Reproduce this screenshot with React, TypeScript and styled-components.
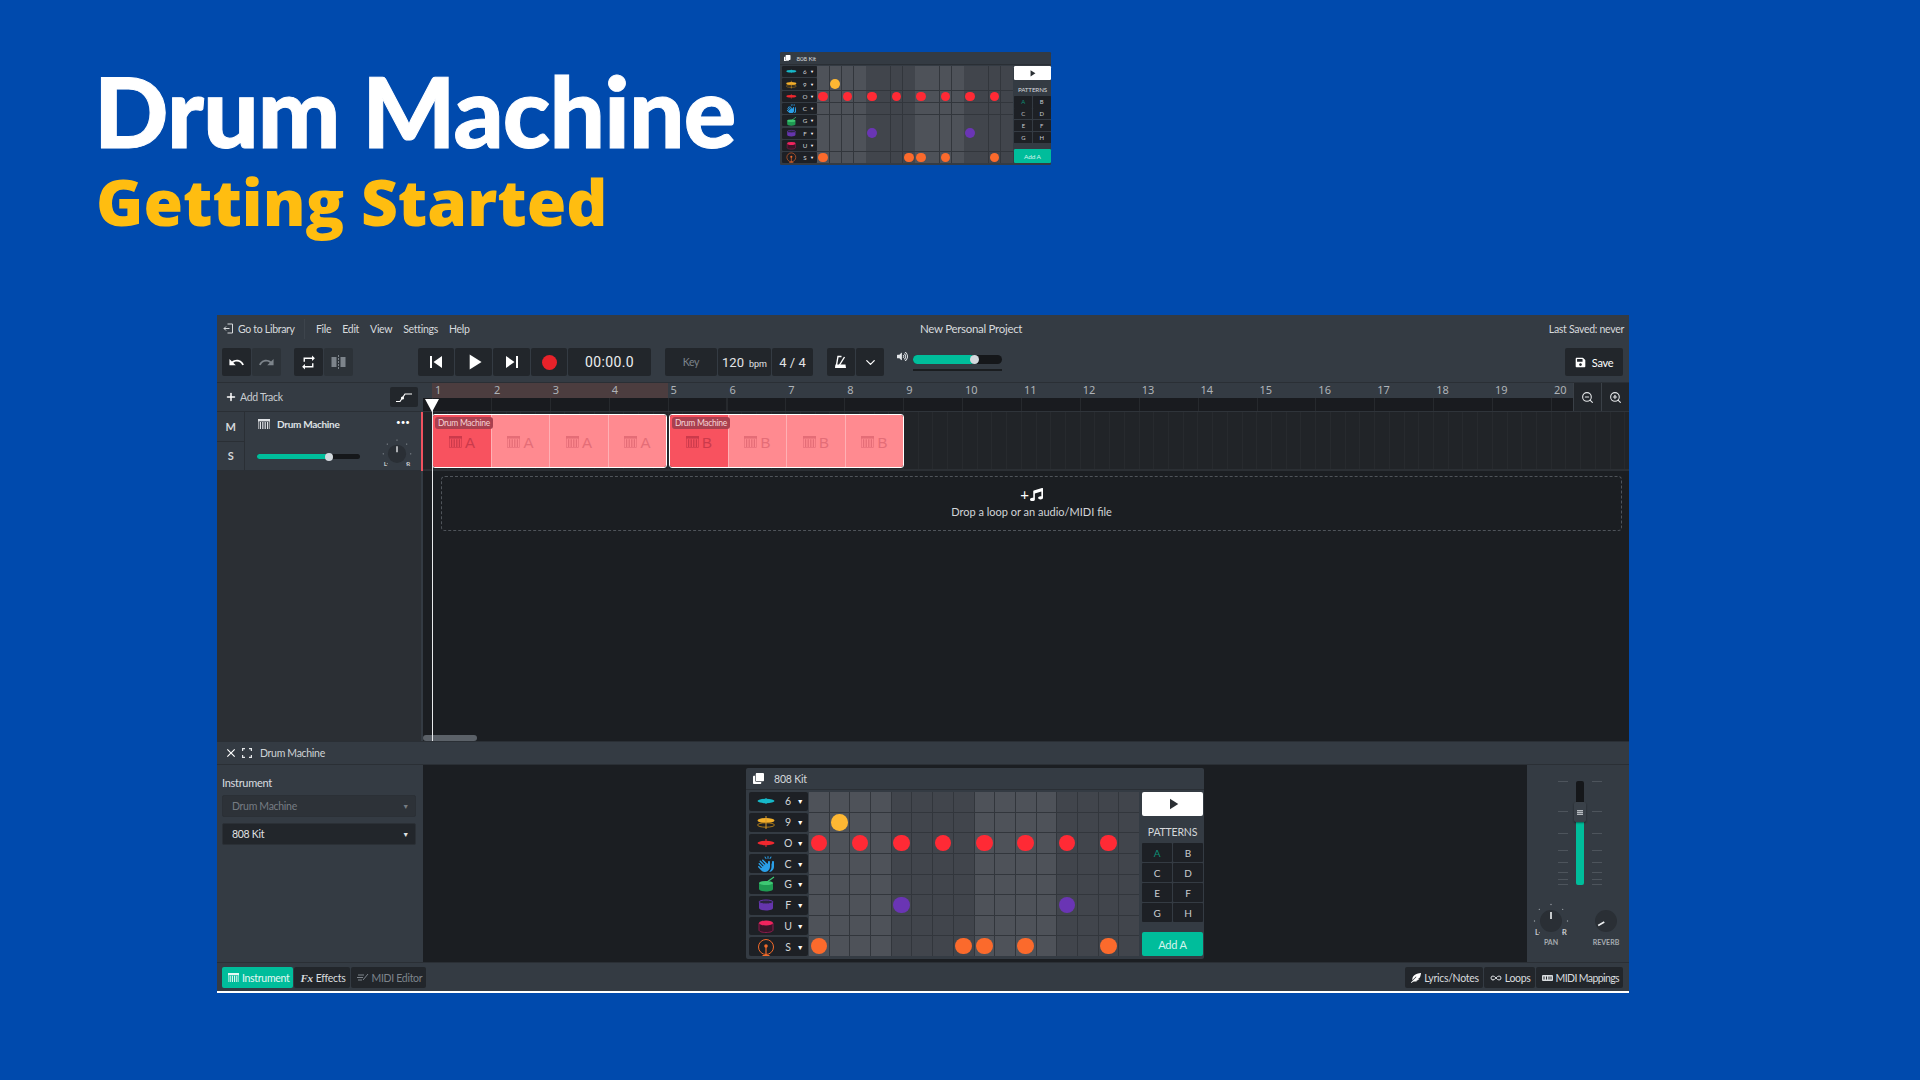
import React, { FC, ReactNode } from "react";
import styled, { createGlobalStyle } from "styled-components";
import { FaMusic, FaSave, FaVolumeUp, FaClone, FaFeatherAlt } from "react-icons/fa";
import { FaHandsClapping } from "react-icons/fa6";
import { MdClose, MdPlayArrow, MdRedo, MdRepeat, MdSkipNext, MdSkipPrevious, MdUndo } from "react-icons/md";
import { ChevronDown, Infinity as InfinityIcon, Plus, ZoomIn, ZoomOut } from "lucide-react";

const GlobalStyle = createGlobalStyle`
    html, body {
        margin: 0;
        padding: 0;
        background: #004aad;
    }
    * {
        box-sizing: border-box;
    }
`;

const green = "#00bd9b";
const panel = "#343b43";
const darkButton = "#22262b";
const stage = "#1b1e22";

const Page = styled.div`
    width: 1920px;
    height: 1080px;
    overflow: hidden;
    background: #004aad;
    font-family: "Lato", "Noto Sans", sans-serif;
`;

const Hero = styled.header`
    height: 315px;
    display: flex;
    padding: 52px 0 0 94px;
`;

const HeroText = styled.div`
    width: 686px;
    padding-top: 2px;
`;

const Title = styled.h1`
    margin: 0;
    font-family: "Lato", sans-serif;
    font-weight: 900;
    font-size: 98px;
    line-height: 112px;
    letter-spacing: -0.8px;
    color: #fff;
    -webkit-text-stroke: 1px #fff;
    white-space: nowrap;
`;

const Subtitle = styled.h2`
    margin: 0 0 0 2px;
    font-family: "Open Sans", sans-serif;
    font-weight: 800;
    font-size: 64px;
    line-height: 72px;
    color: #ffbd10;
    white-space: nowrap;
`;

const Thumb = styled.div`
    zoom: 0.592;
    height: 191px;
`;

const Window = styled.main`
    width: 1412px;
    height: 678px;
    margin-left: 217px;
    display: flex;
    flex-direction: column;
    background: ${panel};
    border-bottom: 2px solid #fff;
    color: #d7dadd;
    font-size: 10.5px;
    letter-spacing: -0.3px;
`;

const TopBar = styled.div`
    height: 32px;
    flex: none;
    display: grid;
    grid-template-columns: 703px auto 1fr;
    align-items: center;
    padding: 0 5px 5px 0;
`;

const TopLeft = styled.div`
    display: flex;
    align-items: center;
    padding-left: 6px;
`;

const LibraryLink = styled.span`
    display: flex;
    align-items: center;
    gap: 4px;
    width: 93px;
`;

const MenuDivider = styled.span`
    width: 1px;
    height: 20px;
    margin: 0 11px 0 -12px;
    background: #3d444c;
`;

const MenuItem = styled.span`
    margin-right: 11px;
`;

const ProjectName = styled.span`
    font-size: 11.5px;
`;

const LastSaved = styled.span`
    justify-self: end;
`;

const Toolbar = styled.div`
    height: 36px;
    flex: none;
    display: flex;
    align-items: flex-start;
    padding: 1px 6px 0 5px;
    border-bottom: 1px solid #2a2f35;
`;

const Group = styled.div<{ $left?: number }>`
    display: flex;
    height: 28px;
    gap: 1px;
    margin-left: ${({ $left }) => $left ?? 0}px;
`;

const ToolButton = styled.div<{ $width?: number; $muted?: boolean; $faded?: boolean }>`
    width: ${({ $width }) => $width ?? 29}px;
    height: 28px;
    display: flex;
    align-items: center;
    justify-content: center;
    background: ${({ $faded }) => ($faded ? "#2c3238" : darkButton)};
    color: ${({ $muted }) => ($muted ? "#7d848b" : "#fff")};
    border-radius: 2px;
    white-space: nowrap;
`;

const RecordDot = styled.span`
    width: 15px;
    height: 15px;
    border-radius: 50%;
    background: #e8222a;
`;

const TimeText = styled.span`
    font-family: "Roboto", sans-serif;
    font-size: 14px;
    letter-spacing: 0.4px;
    color: #eceef0;
`;

const BpmText = styled.span`
    font-family: "Roboto", sans-serif;
    font-size: 13px;
    letter-spacing: 0;
    color: #e2e4e6;
    small {
        font-size: 9px;
        margin-left: 5px;
    }
`;

const VolumeBox = styled.div`
    display: flex;
    gap: 5px;
    margin-left: 13px;
    padding-top: 3px;
    color: #e4e7ea;
`;

const VolumeSlider = styled.div`
    width: 89px;
    padding-top: 4px;
`;

const VolumeTrack = styled.div`
    position: relative;
    height: 9px;
    border-radius: 5px;
    background: #15171a;
    margin-bottom: 5px;
`;

const VolumeFill = styled.div`
    height: 9px;
    border-radius: 5px;
    background: ${green};
`;

const VolumeThumb = styled.span<{ $size: number; $top: number }>`
    position: absolute;
    top: ${({ $top }) => $top}px;
    width: ${({ $size }) => $size}px;
    height: ${({ $size }) => $size}px;
    border-radius: 50%;
    background: #d3d9de;
`;

const VolumeLine = styled.div`
    height: 2px;
    background: #1a1d20;
`;

const SaveButton = styled(ToolButton)`
    margin-left: auto;
    gap: 6px;
    font-size: 11px;
`;

const Arrangement = styled.div`
    position: relative;
    height: 358px;
    flex: none;
    display: flex;
`;

const TrackColumn = styled.div`
    width: 204px;
    flex: none;
    display: flex;
    flex-direction: column;
    background: #2b2f34;
`;

const AddTrackRow = styled.div`
    height: 29px;
    flex: none;
    display: flex;
    align-items: center;
    justify-content: space-between;
    padding: 0 3px 0 8px;
    background: ${panel};
    border-bottom: 1px solid #2a2f35;
`;

const AddTrack = styled.span`
    display: flex;
    align-items: center;
    gap: 3px;
    color: #c9cdd1;
`;

const AutomationButton = styled.div`
    width: 28px;
    height: 20px;
    display: flex;
    align-items: center;
    justify-content: center;
    background: ${darkButton};
    border-radius: 2px;
`;

const TrackRow = styled.div`
    height: 59px;
    flex: none;
    display: flex;
    background: ${panel};
    border-bottom: 1px solid #2a2f35;
`;

const TrackToggles = styled.div`
    width: 28px;
    flex: none;
    display: flex;
    flex-direction: column;
    border-right: 1px solid #2a2f35;
`;

const Toggle = styled.div`
    flex: 1;
    display: flex;
    align-items: center;
    justify-content: center;
    font-weight: 700;
    font-size: 11px;
    color: #d4d7da;
    & + & {
        border-top: 1px solid #2a2f35;
    }
`;

const TrackBody = styled.div`
    position: relative;
    flex: 1;
    padding: 5px 0 0 13px;
`;

const TrackName = styled.div`
    display: flex;
    align-items: center;
    gap: 7px;
    height: 14px;
    font-weight: 700;
    font-size: 10px;
    color: #dfe2e5;
`;

const TrackMore = styled.span`
    position: absolute;
    top: 5px;
    right: 11px;
    font-size: 8px;
    letter-spacing: 0;
    color: #fff;
`;

const TrackSlider = styled.div`
    position: relative;
    width: 103px;
    height: 5px;
    margin: 23px 0 0 -1px;
    border-radius: 3px;
    background: #15171a;
`;

const TrackFill = styled.div`
    height: 5px;
    border-radius: 3px;
    background: ${green};
`;

const TrackKnob = styled.div`
    position: absolute;
    top: 26px;
    right: 9px;
`;

const RedLine = styled.div`
    width: 2px;
    flex: none;
    height: 88px;
    background: linear-gradient(${panel} 0 29px, #f0525f 29px 88px);
`;

const Timeline = styled.div`
    flex: 1;
    min-width: 0;
    display: flex;
    flex-direction: column;
    background: ${stage};
`;

const RulerRow = styled.div`
    height: 29px;
    flex: none;
    display: flex;
    border-bottom: 1px solid #2f343a;
`;

const Ruler = styled.div`
    flex: 1;
    min-width: 0;
    display: flex;
    flex-direction: column;
`;

const BarNumbers = styled.div`
    height: 15px;
    display: flex;
    padding-left: 9px;
    background: ${panel};
`;

const BarNumber = styled.span<{ $loop: boolean }>`
    width: 58.9px;
    flex: none;
    padding-left: 3px;
    line-height: 14px;
    font-size: 11px;
    letter-spacing: 0;
    font-family: "Noto Sans", sans-serif;
    color: #aeb3b8;
    background: ${({ $loop }) => ($loop ? "#4c3d3f" : "transparent")};
`;

const Ticks = styled.div`
    flex: 1;
    background-color: #191b1f;
    background-image: repeating-linear-gradient(90deg, #26292d 0 1px, transparent 1px 58.9px);
    background-position: 9px 0;
`;

const ZoomButton = styled.div`
    width: 28px;
    flex: none;
    display: flex;
    align-items: center;
    justify-content: center;
    background: ${darkButton};
    border-left: 1px solid #3a4047;
    color: #e5e7e9;
`;

const Lane = styled.div`
    height: 59px;
    flex: none;
    display: flex;
    gap: 2px;
    padding: 2px 0 0 9px;
    background-color: #212428;
    background-image: repeating-linear-gradient(90deg, #272a2e 0 1px, transparent 1px 14.72px);
    background-position: 9px 0;
    border-bottom: 2px solid #2b2f34;
`;

const Clip = styled.div`
    position: relative;
    width: 235px;
    height: 54px;
    display: flex;
    border: 1.5px solid #fff;
    border-radius: 3px;
    overflow: hidden;
`;

const ClipCell = styled.div<{ $first: boolean }>`
    flex: 1;
    display: flex;
    align-items: center;
    justify-content: center;
    gap: 3px;
    padding-top: 2px;
    font-family: "Liberation Sans", sans-serif;
    font-size: 15px;
    color: ${({ $first }) => ($first ? "#cb3a4b" : "#e46d77")};
    background: ${({ $first }) => ($first ? "#f8525f" : "#ff8a90")};
    & + & {
        border-left: 1px solid #ffb0b4;
    }
`;

const ClipLabel = styled.span`
    position: absolute;
    top: 2px;
    left: 2px;
    padding: 0 3px;
    height: 12px;
    line-height: 12px;
    border-radius: 3px;
    font-family: "Lato", sans-serif;
    font-size: 8.5px;
    white-space: nowrap;
    color: #f6d3d5;
    background: #a9404f;
`;

const LowerLane = styled.div`
    flex: 1;
    min-height: 0;
    display: flex;
    flex-direction: column;
    padding: 5px 7px 0 18px;
`;

const DropZone = styled.div`
    height: 55px;
    display: flex;
    flex-direction: column;
    align-items: center;
    justify-content: center;
    gap: 2px;
    padding-bottom: 4px;
    border: 1px dashed #4f545a;
    border-radius: 4px;
    font-size: 11px;
    letter-spacing: 0;
    color: #d2d5d8;
`;

const DropIcon = styled.div`
    display: flex;
    align-items: center;
    gap: 1px;
    height: 17px;
    font-size: 15px;
    color: #fff;
`;

const ScrollTrack = styled.div`
    height: 6px;
    margin: auto 0 0 -18px;
`;

const ScrollThumb = styled.div`
    width: 54px;
    height: 6px;
    border-radius: 3px;
    background: #5b6168;
`;

const Playhead = styled.div`
    position: absolute;
    top: 16px;
    bottom: 0;
    left: 208px;
    width: 14px;
`;

const PlayheadLine = styled.span`
    position: absolute;
    top: 11px;
    bottom: 0;
    left: 6.5px;
    width: 1px;
    background: #e8eaec;
`;

const PlayheadHead = styled.span`
    position: absolute;
    top: 0;
    left: 0;
    width: 0;
    height: 0;
    border-left: 7px solid transparent;
    border-right: 7px solid transparent;
    border-top: 13px solid #fff;
`;

const EditorHeader = styled.div`
    height: 24px;
    flex: none;
    display: flex;
    align-items: center;
    gap: 4px;
    padding-left: 7px;
    border-top: 1px solid #2a2f35;
    border-bottom: 1px solid #2a2f35;
    color: #cfd3d6;
`;

const EditorTitle = styled.span`
    margin-left: 4px;
`;

const EditorBody = styled.div`
    height: 197px;
    flex: none;
    display: flex;
`;

const InstrumentPanel = styled.div`
    width: 206px;
    flex: none;
    padding: 10px 7px 0 5px;
`;

const FieldLabel = styled.div`
    height: 20px;
    line-height: 16px;
    font-size: 11px;
    color: #dadde0;
`;

const Select = styled.div<{ $disabled?: boolean }>`
    height: 22px;
    display: flex;
    align-items: center;
    justify-content: space-between;
    padding: 0 6px 0 9px;
    margin-bottom: 6px;
    border-radius: 2px;
    border: 1px solid #2b3036;
    font-size: 10.5px;
    background: ${({ $disabled }) => ($disabled ? "#2d3238" : "#22262b")};
    color: ${({ $disabled }) => ($disabled ? "#767c83" : "#e0e2e4")};
`;

const Caret = styled.span`
    font-size: 7px;
`;

const WidgetStage = styled.div`
    flex: 1;
    min-width: 0;
    display: flex;
    align-items: center;
    justify-content: center;
    background: ${stage};
`;

const MixerPanel = styled.div`
    width: 102px;
    flex: none;
    display: flex;
    flex-direction: column;
    align-items: center;
    padding-top: 16px;
`;

const FaderBox = styled.div`
    position: relative;
    width: 44px;
    height: 104px;
    margin-left: 4px;
`;

const FaderTrack = styled.div`
    position: absolute;
    left: 18px;
    top: 0;
    width: 8px;
    height: 104px;
    border-radius: 2px;
    background: linear-gradient(#15171a 0 40px, ${green} 40px);
`;

const FaderHandle = styled.div`
    position: absolute;
    left: 16px;
    top: 21px;
    width: 12px;
    height: 20px;
    display: flex;
    align-items: center;
    justify-content: center;
    border-radius: 2px;
    background: #3a4149;
    box-shadow: 0 1px 2px #0007;
`;

const FaderGrip = styled.span`
    width: 6px;
    height: 5px;
    background: repeating-linear-gradient(#b6bbc0 0 1px, #6c7279 1px 2px);
`;

const FaderTick = styled.span<{ $right: boolean }>`
    position: absolute;
    ${({ $right }) => ($right ? "right: 0" : "left: 0")};
    width: 10px;
    height: 1px;
    background: #4d545c;
`;

const KnobRow = styled.div`
    display: flex;
    gap: 19px;
    margin: 17px 0 0 1px;
`;

const KnobBlock = styled.div`
    width: 36px;
    display: flex;
    flex-direction: column;
    align-items: center;
    font-size: 7px;
    font-weight: 700;
    letter-spacing: 0;
    color: #a6abb0;
`;

const BottomBar = styled.div`
    height: 29px;
    flex: none;
    display: flex;
    align-items: flex-start;
    justify-content: space-between;
    padding: 4px 6px 0 5px;
    border-top: 1px solid #2a2f35;
`;

const TabGroup = styled.div`
    display: flex;
    gap: 1px;
`;

const Tab = styled.div<{ $active?: boolean; $muted?: boolean; $tight?: boolean }>`
    height: 21px;
    display: flex;
    align-items: center;
    gap: 3px;
    padding: 0 4px 0 6px;
    border-radius: 2px;
    font-size: 10.5px;
    white-space: nowrap;
    letter-spacing: ${({ $tight }) => ($tight ? "-0.6px" : "-0.3px")};
    background: ${({ $active }) => ($active ? green : darkButton)};
    color: ${({ $active, $muted }) => ($active ? "#e6f8f4" : $muted ? "#7d848b" : "#d9dcdf")};
`;

const FxMark = styled.i`
    font-family: "Liberation Serif", serif;
    font-weight: 700;
    font-size: 11px;
`;

const Widget = styled.div`
    width: 458px;
    height: 191px;
    flex: none;
    display: flex;
    flex-direction: column;
    border-radius: 2px;
    background: ${panel};
    color: #d7dadd;
    font-family: "Lato", "Noto Sans", sans-serif;
    font-size: 10.5px;
    letter-spacing: -0.2px;
    text-align: left;
`;

const WidgetHeader = styled.div`
    height: 22px;
    flex: none;
    display: flex;
    align-items: center;
    gap: 10px;
    padding-left: 7px;
    border-bottom: 1px solid #2a2f35;
    color: #fff;
`;

const WidgetName = styled.span`
    color: #d5d8db;
`;

const WidgetBody = styled.div`
    flex: 1;
    display: flex;
    padding: 2px 2px 3px 3px;
`;

const RowLabels = styled.div`
    width: 59px;
    flex: none;
    display: grid;
    grid-template-rows: repeat(8, 1fr);
    gap: 2px;
`;

const RowLabel = styled.div`
    display: grid;
    grid-template-columns: 33px 1fr 12px;
    align-items: center;
    justify-items: center;
    padding-right: 2px;
    border-radius: 2px;
    background: #1d2025;
    font-size: 10.5px;
    color: #d2d5d8;
`;

const SmallCaret = styled.span`
    font-size: 7px;
    color: #fff;
`;

const Grid = styled.div`
    width: 330px;
    flex: none;
    margin-left: 1px;
    display: grid;
    grid-template-columns: repeat(16, 1fr);
    grid-template-rows: repeat(8, 1fr);
    gap: 1px;
    background: #32363c;
`;

const Cell = styled.div<{ $light: boolean }>`
    display: flex;
    align-items: center;
    justify-content: center;
    background: ${({ $light }) => ($light ? "#4e5259" : "#41454c")};
`;

const Hit = styled.span<{ $color: string }>`
    width: 16.5px;
    height: 16.5px;
    border-radius: 50%;
    background: ${({ $color }) => $color};
`;

const SidePanel = styled.div`
    width: 61px;
    flex: none;
    margin-left: 3px;
    display: flex;
    flex-direction: column;
`;

const PlayButton = styled.div`
    height: 24px;
    flex: none;
    display: flex;
    align-items: center;
    justify-content: center;
    border-radius: 2px;
    background: #fff;
    color: #2b2f34;
`;

const PatternsTitle = styled.div`
    margin-top: 10px;
    height: 16px;
    text-align: center;
    font-size: 10.5px;
    color: #d5d8db;
`;

const Patterns = styled.div`
    display: grid;
    grid-template-columns: 1fr 1fr;
    grid-auto-rows: 19px;
    gap: 1px;
    margin-top: 1px;
`;

const PatternButton = styled.div<{ $active: boolean }>`
    display: flex;
    align-items: center;
    justify-content: center;
    background: #1d2025;
    border-radius: 1px;
    font-size: 10px;
    color: ${({ $active }) => ($active ? "#0c8f76" : "#c9cdd1")};
`;

const AddPattern = styled.div`
    height: 24px;
    margin-top: auto;
    display: flex;
    align-items: center;
    justify-content: center;
    border-radius: 2px;
    background: ${green};
    color: #d4f5ee;
    font-size: 11px;
`;

const SeqIcon: FC<{ size?: number; color?: string }> = ({ size = 12, color = "currentColor" }) => (
    <svg width={size} height={size * 0.9} viewBox="0 0 20 18">
        <rect x="0.5" y="0.5" width="19" height="17" fill="none" stroke={color} />
        <rect x="0" y="0" width="20" height="4" fill={color} />
        {[3, 7, 11, 15].map(x => (
            <rect key={x} x={x} y="5" width="2" height="12" fill={color} />
        ))}
    </svg>
);

const Knob: FC<{ angle: number; ticks?: boolean; size?: number }> = ({ angle, ticks, size = 36 }) => {
    const rad = ((angle - 90) * Math.PI) / 180;
    return (
        <svg width={size} height={size} viewBox="0 0 36 36">
            {ticks && [-135, -90, -45, 0, 45, 90, 135].map(a => {
                const r = ((a - 90) * Math.PI) / 180;
                return <circle key={a} cx={18 + 16.5 * Math.cos(r)} cy={19 + 16.5 * Math.sin(r)} r="0.7" fill="#9aa0a6" />;
            })}
            <circle cx="18" cy="19" r="11" fill="#2a2f35" />
            <line
                x1={18 + 2 * Math.cos(rad)}
                y1={19 + 2 * Math.sin(rad)}
                x2={18 + 9 * Math.cos(rad)}
                y2={19 + 9 * Math.sin(rad)}
                stroke="#eef0f2"
                strokeWidth="1.6"
            />
            {ticks && (
                <>
                    <text x="2" y="33" fontSize="7.5" fontWeight="700" fill="#c6cace" fontFamily="Lato">L</text>
                    <text x="29" y="33" fontSize="7.5" fontWeight="700" fill="#c6cace" fontFamily="Lato">R</text>
                </>
            )}
        </svg>
    );
};

const Metronome = () => (
    <svg width="14" height="14" viewBox="0 0 14 14">
        <path d="M2.2 12L4 1.5h3.5" stroke="#fff" strokeWidth="1.4" fill="none" />
        <path d="M1.500 9.500h10l.5 3.500H1z" fill="#fff" />
        <path d="M5.500 10L10.500 2" stroke="#fff" strokeWidth="1.4" />
    </svg>
);

const SplitIcon = () => (
    <svg width="15" height="14" viewBox="0 0 15 14">
        <rect x="0.5" y="2" width="5" height="10" fill="#7d848b" />
        <rect x="9.5" y="2" width="5" height="10" fill="#7d848b" />
        <line x1="7.5" y1="0" x2="7.5" y2="14" stroke="#7d848b" strokeDasharray="2 1" />
    </svg>
);

const DoorIcon = () => (
    <svg width="11" height="11" viewBox="0 0 11 11" fill="none" stroke="#d7dadd" strokeWidth="1">
        <path d="M4.5 1h5v9h-5" />
        <path d="M6.5 5.5H1M3 3.500l-2 2 2 2" />
    </svg>
);

const CornersIcon = () => (
    <svg width="10" height="10" viewBox="0 0 10 10" fill="none" stroke="#e6e8ea" strokeWidth="1.2">
        <path d="M.6 3V.6H3M7 .6h2.400V3M9.400 7v2.400H7M3 9.400H.6V7" />
    </svg>
);

const AutomationIcon = () => (
    <svg width="16" height="11" viewBox="0 0 16 11" stroke="#fff" strokeWidth="1.2" fill="#fff">
        <path d="M0 9.500h4l5-7.500h7" fill="none" />
        <circle cx="6.500" cy="6" r="1.600" stroke="none" />
    </svg>
);

const MidiTag = () => (
    <svg width="11" height="6" viewBox="0 0 11 6">
        <rect width="11" height="6" rx="1" fill="#d9dcdf" />
        {[2, 4.5, 7, 9].map(x => (
            <rect key={x} x={x - 0.5} y="1.5" width="1" height="3" fill="#22262b" />
        ))}
    </svg>
);

const MidiEditIcon = () => (
    <svg width="12" height="9" viewBox="0 0 12 9" stroke="#7d848b" strokeWidth="1" fill="none">
        <path d="M1 2h6M0 4.500h6M1 7h4M6 7l5-6" />
    </svg>
);

type DrumKind = "splash" | "hihat" | "crash" | "clap" | "snare" | "tom" | "low" | "kick";

const DrumIcon: FC<{ kind: DrumKind }> = ({ kind }) => {
    if(kind === "clap") return <FaHandsClapping size={16} color="#2a9fe8" />;
    const icons: Record<Exclude<DrumKind, "clap">, ReactNode> = {
        splash: (
            <>
                <ellipse cx="9" cy="9" rx="8.500" ry="2.200" fill="#17b8c9" />
                <path d="M9 6v6" stroke="#17b8c9" />
            </>
        ),
        hihat: (
            <>
                <ellipse cx="9" cy="7.500" rx="8.500" ry="2.600" fill="#f4b02c" />
                <ellipse cx="9" cy="12" rx="8.500" ry="2.200" fill="none" stroke="#a97819" />
                <path d="M9 3v13" stroke="#d9992a" />
            </>
        ),
        crash: (
            <>
                <ellipse cx="9" cy="9" rx="8.500" ry="2.200" fill="#f0282f" />
                <path d="M9 5v8" stroke="#f0282f" />
            </>
        ),
        snare: (
            <>
                <path d="M2 8h14v6c0 1.500-3 2.500-7 2.500S2 15.500 2 14z" fill="#1f9a52" />
                <ellipse cx="9" cy="8" rx="7" ry="2" fill="#3ec873" />
                <path d="M10 7l7-5" stroke="#3ec873" strokeWidth="1.2" />
            </>
        ),
        tom: (
            <>
                <path d="M2 6h14v6c0 1.500-3 2.500-7 2.500S2 13.500 2 12z" fill="#6535ad" />
                <ellipse cx="9" cy="6" rx="7" ry="2" fill="#2b2440" stroke="#6535ad" />
            </>
        ),
        low: (
            <>
                <path d="M2 6v7c0 1.500 3 2.500 7 2.500s7-1 7-2.500V6" fill="#3a1528" stroke="#8e1b4d" />
                <ellipse cx="9" cy="6" rx="7" ry="2.500" fill="#f0245e" />
            </>
        ),
        kick: (
            <>
                <circle cx="9" cy="9" r="7.500" fill="none" stroke="#f26a2a" />
                <circle cx="9" cy="8" r="1.800" fill="#f26a2a" />
                <path d="M9 8v9M5.500 17.500h7" stroke="#f26a2a" strokeWidth="1.200" />
            </>
        ),
    };
    return <svg width="18" height="18" viewBox="0 0 18 18">{icons[kind]}</svg>;
};

type DrumRow = { kind: DrumKind; key: string; color: string; hits: number[] };

const drumRows: DrumRow[] = [
    { kind: "splash", key: "6", color: "#17b8c9", hits: [] },
    { kind: "hihat", key: "9", color: "#fdb733", hits: [1] },
    { kind: "crash", key: "O", color: "#ff2a35", hits: [0, 2, 4, 6, 8, 10, 12, 14] },
    { kind: "clap", key: "C", color: "#2a9fe8", hits: [] },
    { kind: "snare", key: "G", color: "#2ca85c", hits: [] },
    { kind: "tom", key: "F", color: "#6a35b4", hits: [4, 12] },
    { kind: "low", key: "U", color: "#f0245e", hits: [] },
    { kind: "kick", key: "S", color: "#fb6a2c", hits: [0, 7, 8, 10, 14] },
];

const steps = Array.from({ length: 16 }, (_, i) => i);

const DrumWidget = () => (
    <Widget>
        <WidgetHeader>
            <FaClone size={11} />
            <WidgetName>808 Kit</WidgetName>
        </WidgetHeader>
        <WidgetBody>
            <RowLabels>
                {drumRows.map(row => (
                    <RowLabel key={row.key}>
                        <DrumIcon kind={row.kind} />
                        <span>{row.key}</span>
                        <SmallCaret>▼</SmallCaret>
                    </RowLabel>
                ))}
            </RowLabels>
            <Grid>
                {drumRows.map(row => steps.map(step => (
                    <Cell key={row.key + step} $light={Math.floor(step / 4) % 2 === 0}>
                        {row.hits.includes(step) && <Hit $color={row.color} />}
                    </Cell>
                )))}
            </Grid>
            <SidePanel>
                <PlayButton><MdPlayArrow size={18} /></PlayButton>
                <PatternsTitle>PATTERNS</PatternsTitle>
                <Patterns>
                    {["A", "B", "C", "D", "E", "F", "G", "H"].map(name => (
                        <PatternButton key={name} $active={name === "A"}>{name}</PatternButton>
                    ))}
                </Patterns>
                <AddPattern>Add A</AddPattern>
            </SidePanel>
        </WidgetBody>
    </Widget>
);

const bars = Array.from({ length: 20 }, (_, i) => i + 1);
const faderTicks = [0, 30, 52, 69, 81, 91, 98, 103];

const ClipBlock: FC<{ letter: string }> = ({ letter }) => (
    <Clip>
        {[0, 1, 2, 3].map(i => (
            <ClipCell key={i} $first={i === 0}>
                <SeqIcon size={13} />
                {letter}
            </ClipCell>
        ))}
        <ClipLabel>Drum Machine</ClipLabel>
    </Clip>
);

const App: FC = () => (
    <Page>
        <GlobalStyle />
        <Hero>
            <HeroText>
                <Title>Drum Machine</Title>
                <Subtitle>Getting Started</Subtitle>
            </HeroText>
            <Thumb><DrumWidget /></Thumb>
        </Hero>
        <Window>
            <TopBar>
                <TopLeft>
                    <LibraryLink><DoorIcon />Go to Library</LibraryLink>
                    <MenuDivider />
                    {["File", "Edit", "View", "Settings", "Help"].map(item => (
                        <MenuItem key={item}>{item}</MenuItem>
                    ))}
                </TopLeft>
                <ProjectName>New Personal Project</ProjectName>
                <LastSaved>Last Saved: never</LastSaved>
            </TopBar>
            <Toolbar>
                <Group>
                    <ToolButton><MdUndo size={17} /></ToolButton>
                    <ToolButton $faded $muted><MdRedo size={17} /></ToolButton>
                </Group>
                <Group $left={13}>
                    <ToolButton><MdRepeat size={17} /></ToolButton>
                    <ToolButton $faded><SplitIcon /></ToolButton>
                </Group>
                <Group $left={65}>
                    <ToolButton $width={36}><MdSkipPrevious size={24} /></ToolButton>
                    <ToolButton $width={37}><MdPlayArrow size={26} /></ToolButton>
                    <ToolButton $width={37}><MdSkipNext size={24} /></ToolButton>
                    <ToolButton $width={36}><RecordDot /></ToolButton>
                    <ToolButton $width={83}><TimeText>00:00.0</TimeText></ToolButton>
                </Group>
                <Group $left={14}>
                    <ToolButton $width={52} $muted>Key</ToolButton>
                    <ToolButton $width={53}><BpmText>120<small>bpm</small></BpmText></ToolButton>
                    <ToolButton $width={41}><BpmText>4 / 4</BpmText></ToolButton>
                </Group>
                <Group $left={14}>
                    <ToolButton $width={28}><Metronome /></ToolButton>
                    <ToolButton $width={28}><ChevronDown size={15} /></ToolButton>
                </Group>
                <VolumeBox>
                    <FaVolumeUp size={11} />
                    <VolumeSlider>
                        <VolumeTrack>
                            <VolumeFill style={{ width: "70%" }} />
                            <VolumeThumb $size={9} $top={0} style={{ left: 57 }} />
                        </VolumeTrack>
                        <VolumeLine />
                    </VolumeSlider>
                </VolumeBox>
                <SaveButton $width={58}><FaSave size={11} />Save</SaveButton>
            </Toolbar>
            <Arrangement>
                <TrackColumn>
                    <AddTrackRow>
                        <AddTrack><Plus size={12} color="#fff" strokeWidth={3} />Add Track</AddTrack>
                        <AutomationButton><AutomationIcon /></AutomationButton>
                    </AddTrackRow>
                    <TrackRow>
                        <TrackToggles>
                            <Toggle>M</Toggle>
                            <Toggle>S</Toggle>
                        </TrackToggles>
                        <TrackBody>
                            <TrackName><SeqIcon />Drum Machine</TrackName>
                            <TrackMore>•••</TrackMore>
                            <TrackSlider>
                                <TrackFill style={{ width: "70%" }} />
                                <VolumeThumb $size={8} $top={-1.5} style={{ left: 68 }} />
                            </TrackSlider>
                            <TrackKnob><Knob angle={0} ticks size={30} /></TrackKnob>
                        </TrackBody>
                    </TrackRow>
                </TrackColumn>
                <RedLine />
                <Timeline>
                    <RulerRow>
                        <Ruler>
                            <BarNumbers>
                                {bars.map(bar => (
                                    <BarNumber key={bar} $loop={bar <= 4}>{bar}</BarNumber>
                                ))}
                            </BarNumbers>
                            <Ticks />
                        </Ruler>
                        <ZoomButton><ZoomOut size={13} /></ZoomButton>
                        <ZoomButton><ZoomIn size={13} /></ZoomButton>
                    </RulerRow>
                    <Lane>
                        <ClipBlock letter="A" />
                        <ClipBlock letter="B" />
                    </Lane>
                    <LowerLane>
                        <DropZone>
                            <DropIcon>+<FaMusic size={13} /></DropIcon>
                            Drop a loop or an audio/MIDI file
                        </DropZone>
                        <ScrollTrack><ScrollThumb /></ScrollTrack>
                    </LowerLane>
                </Timeline>
                <Playhead>
                    <PlayheadLine />
                    <PlayheadHead />
                </Playhead>
            </Arrangement>
            <EditorHeader>
                <MdClose size={14} color="#fff" />
                <CornersIcon />
                <EditorTitle>Drum Machine</EditorTitle>
            </EditorHeader>
            <EditorBody>
                <InstrumentPanel>
                    <FieldLabel>Instrument</FieldLabel>
                    <Select $disabled>Drum Machine<Caret>▼</Caret></Select>
                    <Select>808 Kit<Caret>▼</Caret></Select>
                </InstrumentPanel>
                <WidgetStage><DrumWidget /></WidgetStage>
                <MixerPanel>
                    <FaderBox>
                        {faderTicks.flatMap(top => [false, true].map(right => (
                            <FaderTick key={`${top}-${right}`} $right={right} style={{ top }} />
                        )))}
                        <FaderTrack />
                        <FaderHandle><FaderGrip /></FaderHandle>
                    </FaderBox>
                    <KnobRow>
                        <KnobBlock><Knob angle={0} ticks />PAN</KnobBlock>
                        <KnobBlock><Knob angle={-120} />REVERB</KnobBlock>
                    </KnobRow>
                </MixerPanel>
            </EditorBody>
            <BottomBar>
                <TabGroup>
                    <Tab $active><SeqIcon size={11} />Instrument</Tab>
                    <Tab><FxMark>Fx</FxMark>Effects</Tab>
                    <Tab $muted><MidiEditIcon />MIDI Editor</Tab>
                </TabGroup>
                <TabGroup>
                    <Tab><FaFeatherAlt size={10} color="#fff" />Lyrics/Notes</Tab>
                    <Tab><InfinityIcon size={12} />Loops</Tab>
                    <Tab $tight><MidiTag />MIDI Mappings</Tab>
                </TabGroup>
            </BottomBar>
        </Window>
    </Page>
);

export default App;
